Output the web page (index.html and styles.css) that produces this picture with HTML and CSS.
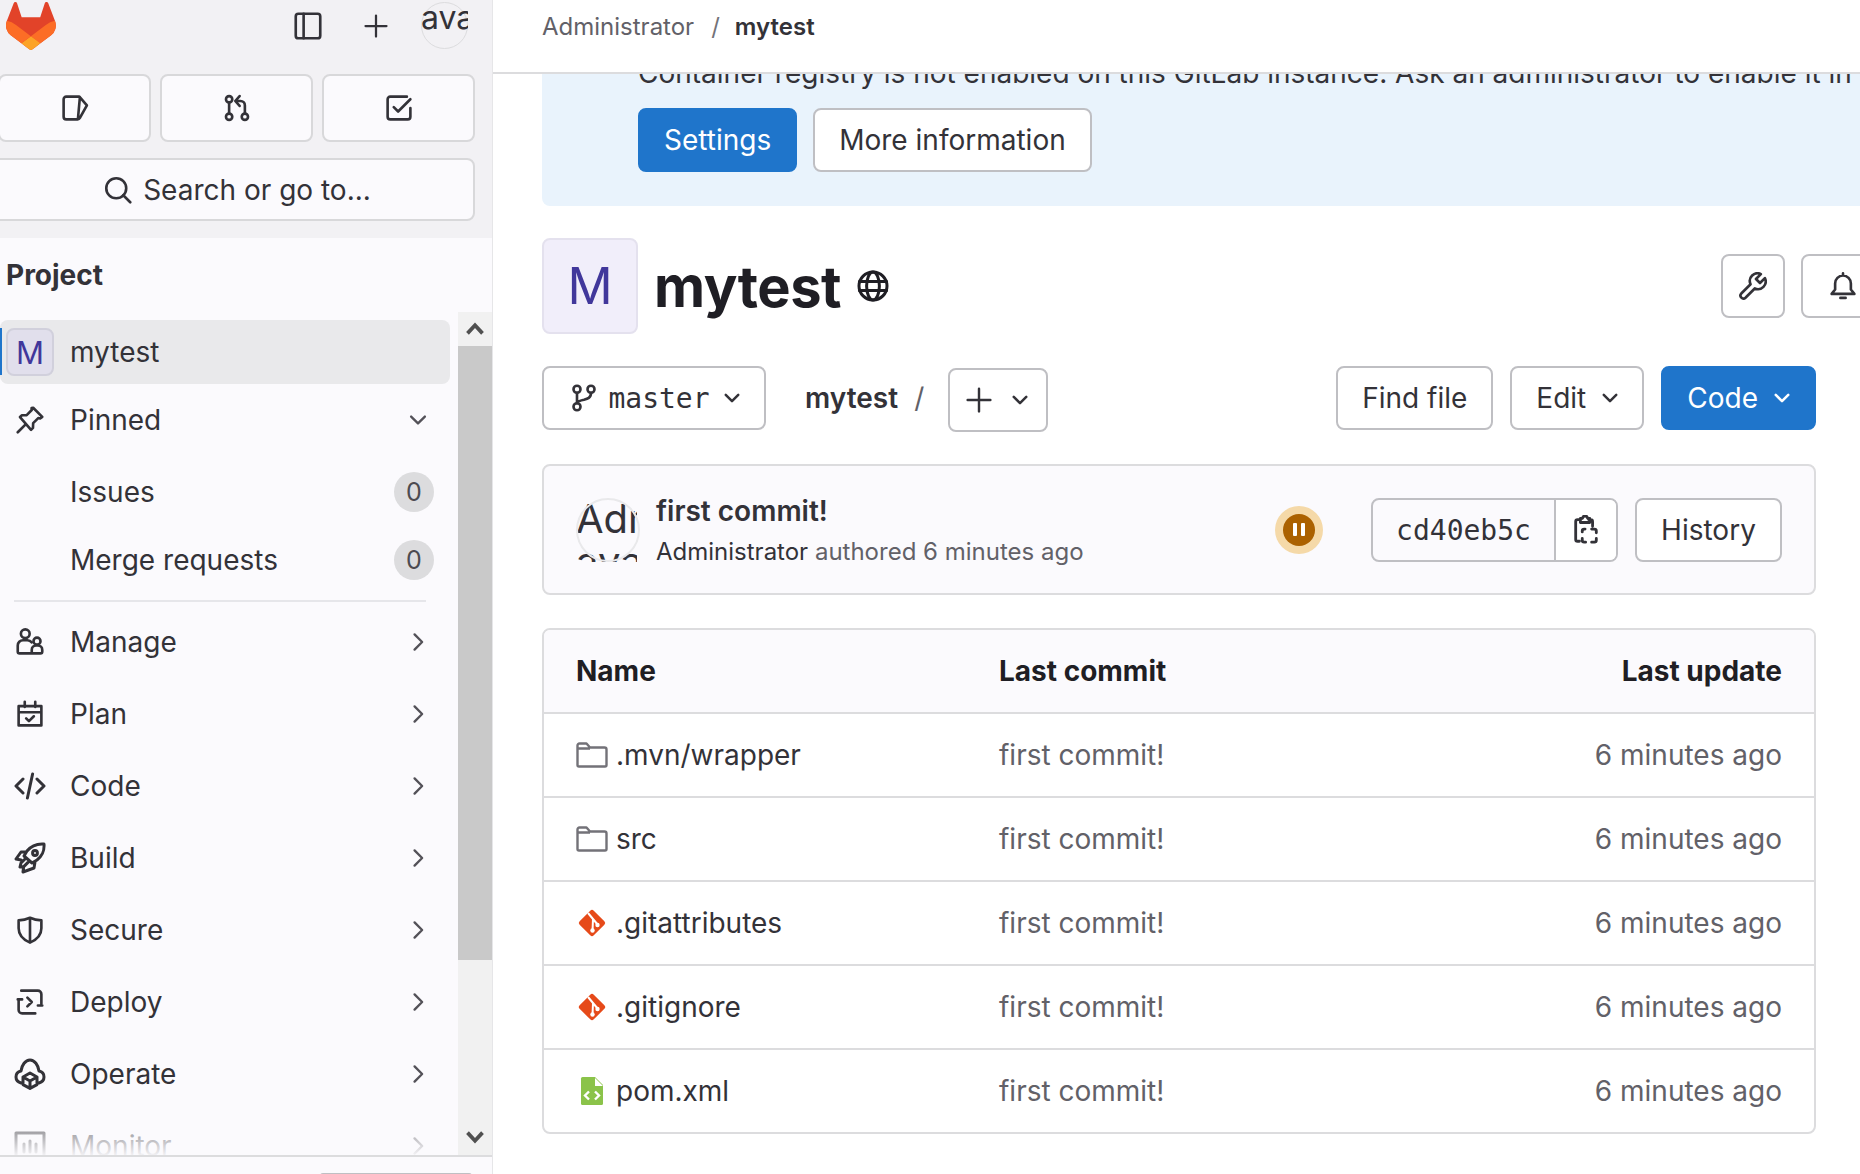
FILE: index.html
```html
<!DOCTYPE html>
<html lang="en">
<head>
    <meta charset="UTF-8">
    <meta name="viewport" content="width=device-width, initial-scale=1.0">
    <title>mytest</title>
    <link rel="stylesheet" href="styles.css">
</head>
<body>
    <svg class="defs" width="0" height="0">
        <symbol id="chev-right" viewBox="0 0 16 16"><path d="M5.500 2.500 11 8l-5.500 5.500"/></symbol>
        <symbol id="chev-down" viewBox="0 0 16 16"><path d="M3 5.500 8 10.500l5-5"/></symbol>
        <symbol id="folder" viewBox="0 0 32 32"><path d="M1.500 6.500a2 2 0 0 1 2-2h7l3.500 4h14.500a2 2 0 0 1 2 2V26a1.500 1.500 0 0 1-1.500 1.500H3A1.500 1.500 0 0 1 1.500 26zM1.500 9.500H14"/></symbol>
        <symbol id="git-file" viewBox="0 0 32 32"><rect x="6" y="6" width="20" height="20" rx="2.500" transform="rotate(45 16 16)" class="git-fill"/><path class="git-line" d="m12 6 10 12M17 12l-.5 12"/><circle class="git-dot" cx="16.500" cy="23.500" r="2.200"/><circle class="git-dot" cx="21.500" cy="18" r="2.200"/></symbol>
        <symbol id="xml-file" viewBox="0 0 32 32"><path class="xml-fill" d="M7 2h12l8 8v18.500a1.500 1.500 0 0 1-1.500 1.500h-19A1.500 1.500 0 0 1 5 28.500V3.500A1.500 1.500 0 0 1 6.500 2z"/><path class="xml-fold" d="M19 3v8h8z"/><path class="xml-line" d="m13 16.500-4 4 4 4M19 16.500l4 4-4 4"/></symbol>
    </svg>

    <div class="page">
        <aside class="sidebar">
            <div class="sidebar-top">
                <div class="logo-row">
                    <svg class="logo" viewBox="0 0 25 24">
                        <path fill="#E24329" d="M24.507 9.5l-.034-.09L21.082.562a.896.896 0 00-1.694.091l-2.29 7.01H7.825L5.535.653a.898.898 0 00-1.694-.09L.451 9.411.416 9.5a6.297 6.297 0 002.09 7.278l.012.01.03.022 5.16 3.867 2.56 1.935 1.554 1.176a1.051 1.051 0 001.268 0l1.555-1.176 2.56-1.935 5.197-3.89.014-.01A6.297 6.297 0 0024.507 9.5z"/>
                        <path fill="#FC6D26" d="M24.507 9.5l-.034-.09a11.44 11.44 0 00-4.56 2.051l-7.447 5.632 4.742 3.584 5.197-3.89.014-.01A6.297 6.297 0 0024.507 9.5z"/>
                        <path fill="#FCA326" d="M7.707 20.677l2.56 1.935 1.555 1.176a1.051 1.051 0 001.268 0l1.555-1.176 2.56-1.935-4.743-3.584-4.755 3.584z"/>
                        <path fill="#FC6D26" d="M5.01 11.461a11.43 11.43 0 00-4.56-2.05L.416 9.5a6.297 6.297 0 002.09 7.278l.012.01.03.022 5.16 3.867 4.745-3.584-7.444-5.632z"/>
                    </svg>
                    <svg class="icon top-toggle" viewBox="0 0 16 16"><rect x="1" y="1" width="14" height="14" rx="1.500"/><path d="M5.500 1v14"/></svg>
                    <svg class="icon top-plus" viewBox="0 0 16 16"><path d="M8 1v14M1 8h14"/></svg>
                    <div class="user-avatar"><span>avatar</span></div>
                </div>
                <div class="shortcut-row">
                    <div class="shortcut first">
                        <svg class="icon" viewBox="0 0 16 16"><path d="M10.500 1.500H3A1.500 1.500 0 0 0 1.500 3v10A1.500 1.500 0 0 0 3 14.500h6.500a1.500 1.500 0 0 0 1.300-.8l4-7.200-4.300-5zM10.800 1.800 9.700 14"/></svg>
                    </div>
                    <div class="shortcut">
                        <svg class="icon" viewBox="0 0 16 16"><circle cx="3.500" cy="3" r="1.800"/><circle cx="3.500" cy="13" r="1.800"/><circle cx="12.500" cy="13" r="1.800"/><path d="M3.500 4.800v6.400M12.500 11.200V6.500a2.500 2.500 0 0 0-2.500-2.500H7.500M9.500 1.200 7 4l2.500 2.800"/></svg>
                    </div>
                    <div class="shortcut">
                        <svg class="icon" viewBox="0 0 16 16"><path d="M14.500 8v5a1.500 1.500 0 0 1-1.500 1.500H3A1.500 1.500 0 0 1 1.500 13V3A1.500 1.500 0 0 1 3 1.500h9.500M5 7.500 7.500 10l7-7"/></svg>
                    </div>
                </div>
                <div class="search-box">
                    <svg class="icon" viewBox="0 0 16 16"><circle cx="7" cy="7" r="5.700"/><path d="m11 11 4 4"/></svg>
                    <span>Search or go to...</span>
                </div>
            </div>

            <div class="context-title">Project</div>

            <div class="nav-wrap">
                <nav class="nav">
                    <div class="nav-row active tight">
                        <span class="active-bar"></span>
                        <span class="tile">M</span>
                        <span class="nav-label">mytest</span>
                    </div>
                    <div class="nav-row">
                        <svg class="icon nav-icon" viewBox="0 0 16 16"><path d="M9.800 1 15 6.200l-1.200.9-1.100-.2-2.900 2.900-.1 2.700-1.100 1.100L2.300 6.300l1.100-1 2.700-.1L9 2.300l-.1-1.100zM5.500 10.500 1 15"/></svg>
                        <span class="nav-label">Pinned</span>
                        <svg class="chev chev-down"><use href="#chev-down"/></svg>
                    </div>
                    <div class="nav-row tight">
                        <span class="nav-label sub">Issues</span>
                        <span class="count">0</span>
                    </div>
                    <div class="nav-row tight">
                        <span class="nav-label sub">Merge requests</span>
                        <span class="count">0</span>
                    </div>
                    <div class="nav-divider"></div>
                    <div class="nav-row">
                        <svg class="icon nav-icon" viewBox="0 0 16 16"><circle cx="5.300" cy="3.300" r="2.500"/><circle cx="12" cy="7.500" r="2"/><path d="M9 8.200A3.500 3.500 0 0 0 6.500 7H4a3 3 0 0 0-3 3v3.500a1 1 0 0 0 1 1h12a1 1 0 0 0 1-1V12.500a2.500 2.500 0 0 0-2.500-2.500h-1A2.500 2.500 0 0 0 9 12.500v2"/></svg>
                        <span class="nav-label">Manage</span>
                        <svg class="chev"><use href="#chev-right"/></svg>
                    </div>
                    <div class="nav-row">
                        <svg class="icon nav-icon" viewBox="0 0 16 16"><path d="M1.500 3.500h13v11h-13zM1.500 7h13M5 1v3M11 1v3M5.800 10.500l1.600 1.600 2.800-2.800"/></svg>
                        <span class="nav-label">Plan</span>
                        <svg class="chev"><use href="#chev-right"/></svg>
                    </div>
                    <div class="nav-row">
                        <svg class="icon nav-icon wide" viewBox="0 0 16 16"><path d="M4.500 4.500 1 8l3.500 3.500M11.500 4.500 15 8l-3.500 3.500M9.300 2 6.700 14"/></svg>
                        <span class="nav-label">Code</span>
                        <svg class="chev"><use href="#chev-right"/></svg>
                    </div>
                    <div class="nav-row">
                        <svg class="icon nav-icon wide" viewBox="0 0 16 16"><path d="M15 1c-4-.3-6.500 1-8.500 3.500L5 7l4 3.500 2.500-1.500C14 7 15.300 5 15 1zM6 5H3.500L1 8.500l2.500.5M10.500 10l-.5 3-5.500 2 .3-2.500M5.500 8.500l-2 2-.5 2 2-.3 2-2"/><circle cx="10.500" cy="5.500" r="1.200"/></svg>
                        <span class="nav-label">Build</span>
                        <svg class="chev"><use href="#chev-right"/></svg>
                    </div>
                    <div class="nav-row">
                        <svg class="icon nav-icon" viewBox="0 0 16 16"><path d="M8 1c2 .9 4.300 1.400 6.500 1.500V7c0 3.500-2.500 6.500-6.500 8.200C4 13.500 1.500 10.500 1.500 7V2.500C3.700 2.400 6 1.900 8 1zM8 1v14"/></svg>
                        <span class="nav-label">Secure</span>
                        <svg class="chev"><use href="#chev-right"/></svg>
                    </div>
                    <div class="nav-row">
                        <svg class="icon nav-icon" viewBox="0 0 16 16"><path d="M3 1.500h9.500a2 2 0 0 1 2 2V9M1.500 7v5.500a2 2 0 0 0 2 2H11M6.500 5.500 9 8l-2.500 2.500M1 6.500h2.500M12.500 10H15"/></svg>
                        <span class="nav-label">Deploy</span>
                        <svg class="chev"><use href="#chev-right"/></svg>
                    </div>
                    <div class="nav-row">
                        <svg class="icon nav-icon wide" viewBox="0 0 16 16"><path d="M3.500 12.500C1.800 12 1 10.800 1 9.500c0-1.500 1-2.700 2.500-3C3.900 3.500 5.700 1 8 1s4.100 2.500 4.500 5.500c1.500.3 2.500 1.500 2.500 3 0 1.300-.8 2.500-2.500 3M8 7.500l3.500 2v3.800L8 15.200l-3.500-1.900V9.500zM4.500 9.500 8 11.500l3.500-2M8 11.500v3.700"/></svg>
                        <span class="nav-label">Operate</span>
                        <svg class="chev"><use href="#chev-right"/></svg>
                    </div>
                    <div class="nav-row">
                        <svg class="icon nav-icon wide" viewBox="0 0 16 16"><path d="M1 1.500h14v13H1zM5 7v4M8 5.500V11M11 7v4"/></svg>
                        <span class="nav-label">Monitor</span>
                        <svg class="chev"><use href="#chev-right"/></svg>
                    </div>
                </nav>
                <div class="nav-fade"></div>
                <div class="scrollbar">
                    <div class="scroll-btn"><svg viewBox="0 0 16 16"><path d="M2 11.500 8 5l6 6.500"/></svg></div>
                    <div class="scroll-thumb"></div>
                    <div class="scroll-track"></div>
                    <div class="scroll-btn bottom"><svg viewBox="0 0 16 16"><path d="M2 4.500 8 11l6-6.500"/></svg></div>
                </div>
            </div>
            <div class="sidebar-footer"><div class="help-btn"></div></div>
        </aside>

        <main class="main">
            <header class="topbar">
                <span class="crumb">Administrator</span>
                <span class="crumb-sep">/</span>
                <span class="crumb current">mytest</span>
            </header>

            <div class="content">
                <section class="alert">
                    <p class="alert-text">Container registry is not enabled on this GitLab instance. Ask an administrator to enable it in</p>
                    <div class="alert-actions">
                        <a class="btn primary">Settings</a>
                        <a class="btn">More information</a>
                    </div>
                </section>

                <section class="project-head">
                    <div class="project-tile">M</div>
                    <h1 class="project-name">mytest</h1>
                    <svg class="icon globe" viewBox="0 0 16 16"><circle cx="8" cy="8" r="7"/><ellipse cx="8" cy="8" rx="3.200" ry="7"/><path d="M1.200 5.800h13.600M1.200 10.200h13.600"/></svg>
                    <div class="project-actions">
                        <a class="btn icon-btn">
                            <svg class="icon" viewBox="0 0 16 16"><path d="M14.800 3.500 12 6.300 9.700 4l2.800-2.800a4.400 4.400 0 0 0-5.900 5.800L1.300 12.300a1.700 1.700 0 0 0 2.400 2.400L9 9.400a4.400 4.400 0 0 0 5.800-5.900z"/></svg>
                        </a>
                        <a class="btn bell-btn">
                            <svg class="icon" viewBox="0 0 16 16"><path d="M8 2a4.500 4.500 0 0 0-4.500 4.500V10L1.500 12.500h13L12.500 10V6.500A4.500 4.500 0 0 0 8 2zM8 .8V2M6.500 14.800h3"/></svg>
                        </a>
                    </div>
                </section>

                <section class="tree-controls">
                    <a class="btn branch-btn">
                        <svg class="icon" viewBox="0 0 16 16"><circle cx="4" cy="3" r="2"/><circle cx="12" cy="3" r="2"/><circle cx="4" cy="13" r="2"/><path d="M4 5v6M12 5c0 3-2 3.500-4 4-2 .4-4 1-4 2"/></svg>
                        <span class="mono">master</span>
                        <svg class="chev-sm"><use href="#chev-down"/></svg>
                    </a>
                    <span class="path-name">mytest</span>
                    <span class="path-sep">/</span>
                    <a class="btn add-btn">
                        <svg class="icon" viewBox="0 0 16 16"><path d="M8 1v14M1 8h14"/></svg>
                        <svg class="chev-sm"><use href="#chev-down"/></svg>
                    </a>
                    <div class="tree-right">
                        <a class="btn">Find file</a>
                        <a class="btn has-chev">Edit<svg class="chev-sm"><use href="#chev-down"/></svg></a>
                        <a class="btn primary has-chev">Code<svg class="chev-sm"><use href="#chev-down"/></svg></a>
                    </div>
                </section>

                <section class="commit-box">
                    <div class="commit-avatar"><span>Administrator's avatar</span></div>
                    <div class="commit-info">
                        <div class="commit-title">first commit!</div>
                        <div class="commit-meta"><b>Administrator</b> authored 6 minutes ago</div>
                    </div>
                    <div class="pipeline">
                        <div class="pipeline-in"><i></i><i></i></div>
                    </div>
                    <div class="sha-group">
                        <span class="sha mono">cd40eb5c</span>
                        <span class="copy">
                            <svg class="icon" viewBox="0 0 16 16"><path d="M4.500 14H3.500a1 1 0 0 1-1-1V3.500a1 1 0 0 1 1-1h1M9.500 2.500h1a1 1 0 0 1 1 1V6M5 1.800h1l.8-1.200h1.400l.8 1.200h1v2.200H5zM7.500 7.500H7a1 1 0 0 0-1 1V9M6 12.500v1a1 1 0 0 0 1 1h.8M11 7.500h1.500a1 1 0 0 1 1 1v1M13.500 12.500v1a1 1 0 0 1-1 1H11"/></svg>
                        </span>
                    </div>
                    <a class="btn history">History</a>
                </section>

                <section class="file-table">
                    <div class="file-row head">
                        <span>Name</span>
                        <span>Last commit</span>
                        <span class="when">Last update</span>
                    </div>
                    <div class="file-row">
                        <span class="file-name"><svg class="file-icon folder"><use href="#folder"/></svg>.mvn/wrapper</span>
                        <span class="muted">first commit!</span>
                        <span class="when muted">6 minutes ago</span>
                    </div>
                    <div class="file-row">
                        <span class="file-name"><svg class="file-icon folder"><use href="#folder"/></svg>src</span>
                        <span class="muted">first commit!</span>
                        <span class="when muted">6 minutes ago</span>
                    </div>
                    <div class="file-row">
                        <span class="file-name"><svg class="file-icon"><use href="#git-file"/></svg>.gitattributes</span>
                        <span class="muted">first commit!</span>
                        <span class="when muted">6 minutes ago</span>
                    </div>
                    <div class="file-row">
                        <span class="file-name"><svg class="file-icon"><use href="#git-file"/></svg>.gitignore</span>
                        <span class="muted">first commit!</span>
                        <span class="when muted">6 minutes ago</span>
                    </div>
                    <div class="file-row">
                        <span class="file-name"><svg class="file-icon"><use href="#xml-file"/></svg>pom.xml</span>
                        <span class="muted">first commit!</span>
                        <span class="when muted">6 minutes ago</span>
                    </div>
                </section>
            </div>
        </main>
    </div>
</body>
</html>
```

FILE: styles.css
```css
* {
    box-sizing: border-box;
}
html, body {
    margin: 0;
    height: 100%;
    overflow: hidden;
}
body {
    font-family: Inter, "Noto Sans", sans-serif;
    font-size: 28px;
    color: #333238;
    background-color: #fff;
}
.defs {
    position: absolute;
}
.mono {
    font-family: "DejaVu Sans Mono", "Liberation Mono", monospace;
}
.icon {
    fill: none;
    stroke: #333238;
    stroke-width: 1.5;
    stroke-linejoin: round;
    stroke-linecap: round;
    flex: none;
}
.page {
    display: flex;
    height: 1174px;
    overflow: hidden;
}

/* sidebar */
.sidebar {
    width: 493px;
    flex: none;
    height: 1174px;
    display: flex;
    flex-direction: column;
    background-color: #fbfafd;
    border-right: 1px solid #e6e6e8;
    overflow: hidden;
}
.sidebar-top {
    height: 238px;
    flex: none;
    background-color: #f2f1f4;
    padding-right: 17px;
}
.logo-row {
    height: 74px;
    display: flex;
    align-items: flex-start;
    padding: 2px 0 0 6px;
}
.logo {
    width: 50px;
    height: 48px;
    margin-right: 238px;
}
.top-toggle {
    width: 28px;
    height: 28px;
    margin: 10px 42px 0 0;
}
.top-plus {
    width: 24px;
    height: 24px;
    margin: 12px 33px 0 0;
}
.user-avatar {
    position: relative;
    width: 47px;
    height: 47px;
    border: 1px solid #dcdcde;
    border-radius: 50%;
}
.user-avatar span {
    position: absolute;
    left: -1px;
    top: -4px;
    width: 47px;
    overflow: hidden;
    font-size: 32px;
    line-height: 38px;
}
.shortcut-row {
    display: flex;
    gap: 9px;
}
.shortcut {
    width: 153px;
    height: 68px;
    flex: none;
    display: flex;
    align-items: center;
    justify-content: center;
    background-color: #fbfafd;
    border: 2px solid #d8d8da;
    border-radius: 8px;
}
.shortcut.first {
    margin-left: -2px;
}
.shortcut .icon {
    width: 28px;
    height: 28px;
}
.search-box {
    height: 63px;
    margin: 16px 0 0 -8px;
    display: flex;
    align-items: center;
    justify-content: center;
    gap: 11px;
    padding-left: 8px;
    background-color: #fbfafd;
    border: 2px solid #d8d8da;
    border-radius: 8px;
}
.search-box .icon {
    width: 28px;
    height: 28px;
}
.context-title {
    height: 74px;
    flex: none;
    padding: 19px 0 0 6px;
    line-height: 36px;
    font-weight: 700;
}
.nav-wrap {
    position: relative;
    flex: 1;
    min-height: 0;
    display: flex;
}
.nav {
    flex: 1;
    min-width: 0;
    padding-top: 8px;
    overflow: hidden;
}
.nav-row {
    position: relative;
    height: 64px;
    margin-bottom: 8px;
    display: flex;
    align-items: center;
    padding: 0 24px 0 16px;
    margin-right: 8px;
    border-radius: 8px;
}
.nav-row.tight {
    margin-bottom: 4px;
}
.nav-row.active {
    background-color: #e9e9eb;
    padding-left: 6px;
}
.active-bar {
    position: absolute;
    left: 0;
    top: 8px;
    width: 2px;
    height: 47px;
    background-color: #1f75cb;
}
.tile {
    width: 48px;
    height: 48px;
    margin-right: 16px;
    flex: none;
    display: flex;
    align-items: center;
    justify-content: center;
    font-size: 31px;
    color: #41379b;
    background-color: #e1dfec;
    border: 2px solid #d1d0dc;
    border-radius: 8px;
}
.nav-icon {
    width: 28px;
    height: 28px;
    margin-right: 26px;
}
.nav-icon.wide {
    width: 32px;
    height: 32px;
    margin: 0 24px 0 -2px;
}
.nav-label {
    flex: 1;
}
.nav-label.sub {
    padding-left: 54px;
}
.count {
    width: 40px;
    height: 40px;
    margin-right: -8px;
    flex: none;
    display: flex;
    align-items: center;
    justify-content: center;
    font-size: 25px;
    color: #4c4b51;
    background-color: #dcdcde;
    border-radius: 50%;
}
.chev, .chev-sm {
    flex: none;
    fill: none;
    stroke: #535158;
    stroke-width: 1.7;
    stroke-linecap: round;
    stroke-linejoin: round;
}
.chev {
    width: 22px;
    height: 22px;
    margin-right: -3px;
}
.nav-divider {
    height: 2px;
    margin: 8px 32px 8px 14px;
    background-color: #e6e6ea;
}
.nav-fade {
    position: absolute;
    left: 0;
    bottom: 0;
    width: 458px;
    height: 56px;
    background: linear-gradient(to bottom, rgba(251, 250, 253, 0), rgba(251, 250, 253, 0.95));
}
.scrollbar {
    width: 34px;
    flex: none;
    display: flex;
    flex-direction: column;
    background-color: #f1f1f1;
}
.scroll-btn {
    height: 34px;
    flex: none;
    display: flex;
    align-items: center;
    justify-content: center;
}
.scroll-btn.bottom {
    height: 36px;
}
.scroll-btn svg {
    width: 20px;
    height: 20px;
    fill: none;
    stroke: #505050;
    stroke-width: 3;
}
.scroll-thumb {
    height: 614px;
    flex: none;
    background-color: #c9c9c9;
}
.scroll-track {
    flex: 1;
}
.sidebar-footer {
    height: 19px;
    flex: none;
    padding: 16px 20px 0 320px;
    border-top: 2px solid #dcdcde;
}
.help-btn {
    height: 6px;
    border: 2px solid #bfbfc3;
    border-radius: 8px;
}

/* main column */
.main {
    flex: 1;
    min-width: 0;
    display: flex;
    flex-direction: column;
    overflow: hidden;
}
.topbar {
    height: 74px;
    flex: none;
    display: flex;
    align-items: flex-start;
    padding: 9px 0 0 49px;
    line-height: 36px;
    font-size: 24px;
    background-color: #fff;
    border-bottom: 2px solid #dcdcde;
}
.crumb {
    color: #626168;
}
.crumb.current {
    font-weight: 600;
    color: #333238;
}
.crumb-sep {
    margin: 0 15px 0 17px;
    color: #737278;
}
.content {
    flex: 1;
    min-height: 0;
    overflow: hidden;
}
.alert {
    width: 1500px;
    margin: -21px 0 0 49px;
    padding: 0 0 34px 96px;
    background-color: #e9f3fc;
    border-radius: 8px;
}
.alert-text {
    margin: 0 0 15px;
    line-height: 40px;
    white-space: nowrap;
}
.alert-actions {
    display: flex;
    gap: 16px;
}
.btn {
    height: 64px;
    flex: none;
    display: inline-flex;
    align-items: center;
    justify-content: center;
    padding: 0 24px;
    background-color: #fff;
    border: 2px solid #bfbfc3;
    border-radius: 8px;
    font-size: 28px;
    color: #333238;
}
.btn.has-chev {
    padding-right: 22px;
}
.btn.primary {
    background-color: #1f75cb;
    border-color: #1f75cb;
    color: #fff;
}
.chev-sm {
    width: 20px;
    height: 20px;
    margin-left: 14px;
    stroke: #333238;
    stroke-width: 2;
}
.primary .chev-sm {
    stroke: #fff;
}
.project-head {
    width: 1379px;
    height: 95px;
    margin: 32px 0 0 49px;
    display: flex;
    align-items: center;
}
.project-tile {
    width: 96px;
    height: 96px;
    flex: none;
    display: flex;
    align-items: center;
    justify-content: center;
    font-size: 50px;
    color: #41379b;
    background-color: #f1eefa;
    border: 2px solid #e4e1ee;
    border-radius: 8px;
}
.project-name {
    margin: 2px 16px 0 16px;
    font-size: 56px;
    font-weight: 700;
    letter-spacing: -0.5px;
    color: #1f1e24;
}
.globe {
    width: 32px;
    height: 32px;
    stroke: #1f1e24;
}
.project-actions {
    margin-left: auto;
    display: flex;
    gap: 16px;
}
.icon-btn {
    width: 64px;
    padding: 0;
}
.bell-btn {
    width: 120px;
    justify-content: flex-start;
    padding: 0 0 0 26px;
}
.project-actions .icon {
    width: 28px;
    height: 28px;
}
.tree-controls {
    width: 1274px;
    height: 65px;
    margin: 33px 0 0 49px;
    display: flex;
    align-items: flex-start;
}
.branch-btn {
    width: 224px;
    padding: 0 0 0 4px;
}
.branch-btn .icon {
    width: 28px;
    height: 28px;
    margin-right: 10px;
}
.branch-btn .mono {
    font-size: 28px;
}
.branch-btn .chev-sm {
    margin-left: 12px;
}
.path-name {
    margin-left: 39px;
    line-height: 64px;
    font-weight: 600;
}
.path-sep {
    margin: 0 24px 0 16px;
    line-height: 64px;
    color: #626168;
}
.add-btn {
    width: 100px;
    margin-top: 2px;
    padding: 0;
}
.add-btn .icon {
    width: 26px;
    height: 26px;
}
.add-btn .chev-sm {
    margin-left: 18px;
}
.tree-right {
    margin-left: auto;
    display: flex;
    gap: 17px;
}
.commit-box {
    width: 1274px;
    height: 131px;
    margin: 33px 0 0 49px;
    display: flex;
    align-items: center;
    padding: 0 32px;
    background-color: #fbfafd;
    border: 2px solid #dcdcde;
    border-radius: 8px;
}
.commit-avatar {
    position: relative;
    width: 64px;
    height: 64px;
    margin-right: 16px;
    flex: none;
    overflow: hidden;
}
.commit-avatar::after {
    content: "";
    position: absolute;
    inset: 0;
    border: 2px solid #e9e9eb;
    border-radius: 50%;
}
.commit-avatar span {
    display: block;
    width: 61px;
    margin-top: -1px;
    overflow: hidden;
    font-size: 40px;
    line-height: 43px;
    word-break: keep-all;
    color: #333238;
}
.commit-info {
    flex: 1;
    min-width: 0;
    padding-top: 4px;
}
.commit-title {
    font-weight: 600;
    line-height: 36px;
}
.commit-meta {
    margin-top: 5px;
    line-height: 36px;
    font-size: 24px;
    color: #626168;
}
.commit-meta b {
    font-weight: 400;
    color: #333238;
}
.pipeline {
    width: 48px;
    height: 48px;
    margin-right: 48px;
    flex: none;
    display: flex;
    align-items: center;
    justify-content: center;
    background-color: #f5d9a8;
    border-radius: 50%;
}
.pipeline-in {
    width: 32px;
    height: 32px;
    display: flex;
    align-items: center;
    justify-content: center;
    gap: 4px;
    background-color: #ab6100;
    border-radius: 50%;
}
.pipeline-in i {
    width: 4px;
    height: 13px;
    background-color: #fff;
    border-radius: 1px;
}
.sha-group {
    width: 247px;
    height: 64px;
    flex: none;
    display: flex;
    border: 2px solid #bfbfc3;
    border-radius: 8px;
    overflow: hidden;
}
.sha {
    width: 183px;
    display: flex;
    align-items: center;
    justify-content: center;
    padding-top: 2px;
    font-size: 28px;
    border-right: 2px solid #bfbfc3;
}
.copy {
    flex: 1;
    display: flex;
    align-items: center;
    justify-content: center;
    background-color: #fff;
}
.copy .icon {
    width: 30px;
    height: 30px;
}
.history {
    width: 147px;
    margin-left: 17px;
    padding: 0;
}
.file-table {
    width: 1274px;
    margin: 33px 0 0 49px;
    border: 2px solid #dcdcde;
    border-radius: 8px;
    overflow: hidden;
}
.file-row {
    height: 84px;
    display: grid;
    grid-template-columns: 423px 1fr 400px;
    align-items: center;
    padding: 0 32px;
    border-top: 2px solid #dcdcde;
}
.file-row.head {
    height: 83px;
    padding-bottom: 2px;
    font-weight: 700;
    color: #1f1e24;
    background-color: #fbfafd;
    border-top: 0;
}
.file-row.head + .file-row {
    margin-top: -1px;
}
.file-name {
    display: flex;
    align-items: center;
}
.file-icon {
    width: 32px;
    height: 32px;
    margin-right: 8px;
    flex: none;
}
.file-icon.folder {
    fill: none;
    stroke: #737278;
    stroke-width: 2.4;
    stroke-linejoin: round;
}
.git-fill {
    fill: #e64a19;
}
.git-line {
    fill: none;
    stroke: #fff;
    stroke-width: 2;
}
.git-dot {
    fill: #fff;
}
.xml-fill {
    fill: #8bc34a;
}
.xml-fold {
    fill: #fff;
}
.xml-line {
    fill: none;
    stroke: #fff;
    stroke-width: 2.4;
}
.when {
    text-align: right;
}
.muted {
    color: #626168;
}
```
